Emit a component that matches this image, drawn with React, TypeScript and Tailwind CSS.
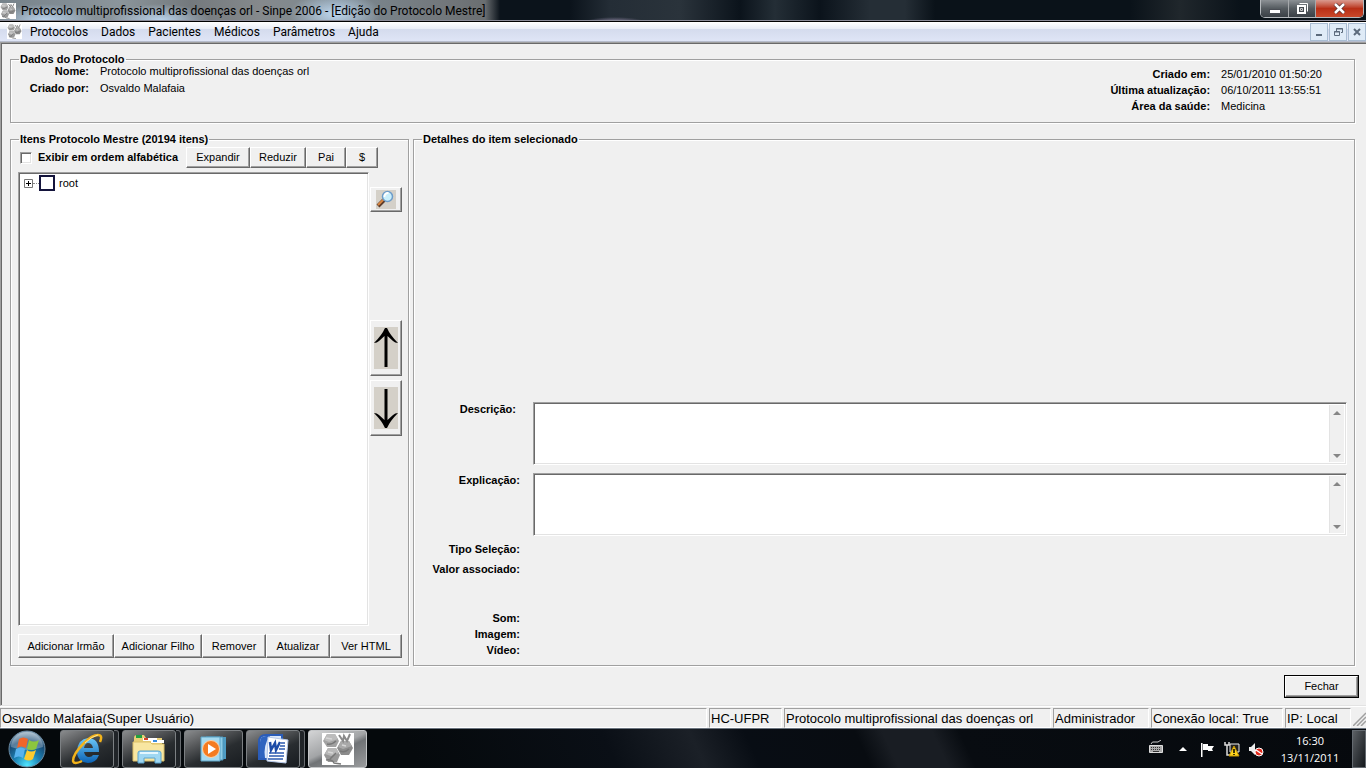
import { useState } from "react";
import type { ReactNode } from "react";

const menus = ["Protocolos", "Dados", "Pacientes", "Médicos", "Parâmetros", "Ajuda"];

const raised =
  "bg-[#f0f0f0] border border-t-white border-l-white border-r-[#696969] border-b-[#696969] shadow-[inset_-1px_-1px_0_#a0a0a0]";
const sunken =
  "bg-white border border-t-[#a0a0a0] border-l-[#a0a0a0] border-r-white border-b-white shadow-[inset_1px_1px_0_#696969,inset_-1px_-1px_0_#e3e3e3]";

const Button = ({ className = "", children, ...rest }: any) => (
  <button type="button" className={`${raised} flex items-center justify-center whitespace-nowrap ${className}`} {...rest}>
    {children}
  </button>
);

const Group = ({ title, className = "", children }: { title: string; className?: string; children: ReactNode }) => (
  <fieldset
    className={`flex min-w-0 flex-col border border-[#a0a0a0] shadow-[1px_1px_0_#fff,inset_1px_1px_0_#fff] ${className}`}
  >
    <legend className="ml-2 px-px text-[11px] leading-3 font-bold">{title}</legend>
    {children}
  </fieldset>
);

const SinpeIcon = ({ size }: { size: number }) => (
  <svg width={size} height={size} viewBox="0 0 32 32" className="shrink-0">
    <rect width="32" height="32" fill="#fff" />
    <path d="M5 1h8l4 7-3 6H5L1 8z" fill="#a2a2a2" />
    <path d="M5 1h8l3 5-9 3-5-2z" fill="#bcbcbc" />
    <path d="M6 15h8l4 7-3 7H6l-4-7z" fill="#989898" />
    <path d="M6 15h8l3 5-8 3-6-2z" fill="#b8b8b8" />
    <path d="M19 8h8l4 7-4 7h-8l-4-7z" fill="#8c8c8c" />
    <path d="M19 8h8l3 5-9 3-5-2z" fill="#a9a9a9" />
    <path d="M17 2l4 6 1-5 3 5 3-7" stroke="#8a8a8a" strokeWidth="2" fill="none" />
    <path d="M4 27q6-1 8 3l7 1M5 11q5 1 9-3M18 18q5 2 9-2M8 26l6-6" stroke="#787878" strokeWidth="1.5" fill="none" />
    <path d="M4 5l6 1M20 12l4 1M6 19l5 1" stroke="#d6d6d6" strokeWidth="1.5" fill="none" />
  </svg>
);

const Magnifier = () => (
  <svg width="20" height="19" viewBox="0 0 20 19">
    <rect width="20" height="19" fill="#d4d0c8" />
    <path d="M2 16l6-6" stroke="#5b3a28" strokeWidth="4" />
    <path d="M2 15l6-6" stroke="#d88642" strokeWidth="2" />
    <circle cx="11.5" cy="6.500" r="5" fill="#c9effc" stroke="#6d9cc9" strokeWidth="1.5" />
    <path d="M8.500 7a3.500 3.500 0 0 1 4-4" stroke="#fff" strokeWidth="2" fill="none" />
  </svg>
);

const Arrow = ({ down = false }) => (
  <svg width="24" height="42" viewBox="0 0 24 42" className={down ? "rotate-180" : ""}>
    <rect width="24" height="42" fill="#d4d0c8" />
    <path d="M10.500 40V9L5 14q-2 2-5 2Q8 8 11 1h2q3 7 11 15-3 0-5-2l-5.500-5v31z" fill="#000" />
  </svg>
);

const TextBox = ({ id }: { id: string }) => (
  <div className={`${sunken} flex h-[63px] p-0.5`}>
    <textarea id={id} className="min-w-0 flex-1 resize-none bg-white outline-none" />
    <div className="flex w-[15px] flex-col justify-between border-l border-[#e3e3e3] bg-[#f0f0f0] pt-[5px] pb-[3px]">
      <button type="button" aria-label="Rolar para cima" className="flex justify-center py-px">
        <svg width="8" height="4" viewBox="0 0 8 4"><path d="M4 0l4 4H0z" fill="#868686" /></svg>
      </button>
      <button type="button" aria-label="Rolar para baixo" className="flex justify-center py-px">
        <svg width="8" height="4" viewBox="0 0 8 4"><path d="M0 0h8L4 4z" fill="#868686" /></svg>
      </button>
    </div>
  </div>
);

const TitleBar = () => (
  <header className="flex h-[22px] items-start border-b border-black bg-[radial-gradient(ellipse_50px_16px_at_45px_20px,#b9d2eb,transparent),radial-gradient(ellipse_50px_16px_at_160px_20px,#b9d2eb,transparent),radial-gradient(ellipse_46px_22px_at_335px_14px,#bdd6ee,transparent),radial-gradient(ellipse_30px_5px_at_615px_22px,#8c83a0,transparent),linear-gradient(90deg,#77838b_0px,#8b959b_120px,#74797d_190px,#85898c_260px,#7c8991_340px,#73787c_440px,#6a6e71_485px,#0b131b_500px,#0b131b_570px,#242d36_610px,#2a333b_680px,#0b131b_740px,#242e36_775px,#0b131b_820px,#252e36_870px,#252e36_905px,#0a1219_935px,#0a1219_1130px,#20272c_1180px,#0a1219_1240px)] shadow-[inset_0_-1px_0_#8b8b98]">
    <div className="flex min-w-0 flex-1 items-center gap-[5px] pt-[3px]">
      <SinpeIcon size={16} />
      <h1 className="truncate text-[12px] leading-4">
        Protocolo multiprofissional das doenças orl - Sinpe 2006 - [Edição do Protocolo Mestre]
      </h1>
    </div>
    <div className="mr-0.5 flex h-[18px] overflow-hidden rounded-b-[5px] border border-t-0 border-[#b5b9bd]">
      <button type="button" aria-label="Minimizar" className="flex w-[28px] items-center justify-center border-r border-[#a5a8ab] bg-linear-to-b from-[#8c9195] via-[#555b60] via-50% to-[#3a4046]">
        <svg width="12" height="10" viewBox="0 0 12 10"><rect x="0.500" y="5.500" width="11" height="4" fill="#fff" stroke="#4a4e55" /></svg>
      </button>
      <button type="button" aria-label="Restaurar" className="flex w-[27px] items-center justify-center border-r border-[#a5a8ab] bg-linear-to-b from-[#8c9195] via-[#555b60] via-50% to-[#3a4046]">
        <svg width="13" height="13" viewBox="0 0 13 13" fill="none"><path d="M3.500 1.500h8v8" stroke="#fff" /><path d="M2 4h7v7H2z" fill="#444a50" stroke="#fff" strokeWidth="2" /><path d="M4.500 6.500h2v2h-2z" stroke="#ccc" /></svg>
      </button>
      <button type="button" aria-label="Fechar janela" className="flex w-[47px] items-center justify-center bg-linear-to-b from-[#d99a8f] via-[#b82f16] via-50% to-[#c9482a]">
        <svg width="13" height="11" viewBox="0 0 13 11"><path d="M2 1l9 9M11 1l-9 9" stroke="#5a3030" strokeWidth="4" /><path d="M2 1l9 9M11 1l-9 9" stroke="#fff" strokeWidth="2.500" /></svg>
      </button>
    </div>
  </header>
);

const mdiButton = "flex h-[18px] w-[18px] items-center justify-center border border-[#a9bdd3] bg-[#dfebf7]";

const MenuBar = () => (
  <nav className="flex h-[20px] items-center border-b border-[#b6bccc] bg-[linear-gradient(#fff,#e9edf7_35%,#d4dbed_36%,#dfe5f6)] pl-[7px]">
    <SinpeIcon size={15} />
    <div className="flex flex-1 gap-[13px] pl-2">
      {menus.map((item) => (
        <button key={item} type="button" className="text-[12px] leading-4">
          {item}
        </button>
      ))}
    </div>
    <div className="flex gap-px">
      <button type="button" aria-label="Minimizar documento" className={mdiButton}>
        <svg width="8" height="8" viewBox="0 0 8 8"><path d="M1 6h6v2H1z" fill="#5c6b7c" /></svg>
      </button>
      <button type="button" aria-label="Restaurar documento" className={mdiButton}>
        <svg width="9" height="8" viewBox="0 0 9 8" fill="none" stroke="#5c6b7c"><path d="M2.500 3V.5h6v4H7M2 1h7M.5 3.500h5v4h-5zM0 4h6" /></svg>
      </button>
      <button type="button" aria-label="Fechar documento" className={mdiButton}>
        <svg width="8" height="8" viewBox="0 0 8 8"><path d="M1 1l6 6M7 1L1 7" stroke="#5c6b7c" strokeWidth="2" /></svg>
      </button>
    </div>
  </nav>
);

const ProtocolInfo = () => (
  <Group title="Dados do Protocolo" className="min-h-[70px]">
    <div className="flex justify-between pr-8">
      <dl className="grid grid-cols-[78px_auto] content-start gap-x-[11px] gap-y-[5px] leading-3">
        <dt className="text-right font-bold">Nome:</dt>
        <dd>Protocolo multiprofissional das doenças orl</dd>
        <dt className="text-right font-bold">Criado por:</dt>
        <dd>Osvaldo Malafaia</dd>
      </dl>
      <dl className="grid grid-cols-[auto_auto] content-start gap-x-[11px] pt-px leading-4">
        <dt className="text-right font-bold">Criado em:</dt>
        <dd>25/01/2010 01:50:20</dd>
        <dt className="text-right font-bold">Última atualização:</dt>
        <dd>06/10/2011 13:55:51</dd>
        <dt className="text-right font-bold">Área da saúde:</dt>
        <dd>Medicina</dd>
      </dl>
    </div>
  </Group>
);

const ProtocolItems = () => {
  const [alphabetical, setAlphabetical] = useState(false);

  return (
    <Group title="Itens Protocolo Mestre (20194 itens)" className="w-[399px] shrink-0">
      <div className="flex flex-1 flex-col pt-[2px] pr-[6px] pb-[7px] pl-[7px]">
        <div className="flex h-[21px] items-center">
          <label className="flex w-[168px] items-center gap-1.5 pl-0.5 font-bold whitespace-nowrap">
            <input
              type="checkbox"
              checked={alphabetical}
              onChange={(e) => setAlphabetical(e.target.checked)}
              className={`${sunken} h-3 w-3 shrink-0 appearance-none checked:bg-[#333]`}
            />
            Exibir em ordem alfabética
          </label>
          <Button className="h-full w-[64px]">Expandir</Button>
          <Button className="h-full w-[56px]">Reduzir</Button>
          <Button className="h-full w-[40px]">Pai</Button>
          <Button className="h-full w-[32px]">$</Button>
        </div>
        <div className="mt-1 flex flex-1">
          <ul className={`${sunken} flex-1 p-[2px] pl-[5px]`}>
            <li className="flex items-center leading-4">
              <button type="button" aria-label="Expandir root" className="flex">
                <svg width="9" height="9" viewBox="0 0 9 9" fill="none"><path d="M.5.5h8v8h-8z" stroke="#777" /><path d="M2 4.500h5M4.500 2v5" stroke="#000" /></svg>
              </button>
              <span className="w-1.5 border-t border-dotted border-[#888]" />
              <input type="checkbox" id="root" className="h-4 w-4 appearance-none border-2 border-[#14143c] bg-white checked:bg-[#14143c]" />
              <label htmlFor="root" className="pl-1">root</label>
            </li>
          </ul>
          <div className="flex w-[33px] flex-col pt-[15px] pl-px">
            <Button aria-label="Pesquisar" className="h-[25px]"><Magnifier /></Button>
            <Button aria-label="Mover para cima" className="mt-[108px] h-[56px]"><Arrow /></Button>
            <Button aria-label="Mover para baixo" className="mt-1 h-[56px]"><Arrow down /></Button>
          </div>
        </div>
        <div className="mt-2 flex h-[24px]">
          <Button className="w-[96px]">Adicionar Irmão</Button>
          <Button className="w-[88px]">Adicionar Filho</Button>
          <Button className="w-[64px]">Remover</Button>
          <Button className="w-[64px]">Atualizar</Button>
          <Button className="flex-1">Ver HTML</Button>
        </div>
      </div>
    </Group>
  );
};

const ItemDetails = () => (
  <Group title="Detalhes do item selecionado" className="flex-1">
    <div className="pt-[257px] pr-[7px] pb-1">
      <div className="grid grid-cols-[106px_1fr] gap-x-[13px] gap-y-2 text-right leading-[14px] font-bold">
        <label htmlFor="descricao" className="pr-1">Descrição:</label>
        <TextBox id="descricao" />
        <label htmlFor="explicacao">Explicação:</label>
        <TextBox id="explicacao" />
      </div>
      <dl className="w-[106px] pt-[5px] text-right leading-4 font-bold">
        <dt>Tipo Seleção:</dt>
        <dt className="pt-1">Valor associado:</dt>
        <dt className="pt-[33px]">Som:</dt>
        <dt>Imagem:</dt>
        <dt>Vídeo:</dt>
      </dl>
    </div>
  </Group>
);

const panel =
  "border border-t-[#a0a0a0] border-l-[#a0a0a0] border-r-white border-b-white pl-px whitespace-nowrap";

const StatusBar = () => (
  <footer className="flex h-[22px] gap-0.5 border-t border-white bg-[#f0f0f0] pt-px text-[13px] leading-[19px]">
    <div className={`${panel} flex-1`}>Osvaldo Malafaia(Super Usuário)</div>
    <div className={`${panel} w-[73px]`}>HC-UFPR</div>
    <div className={`${panel} w-[267px]`}>Protocolo multiprofissional das doenças orl</div>
    <div className={`${panel} w-[96px]`}>Administrador</div>
    <div className={`${panel} w-[132px]`}>Conexão local: True</div>
    <div className={`${panel} w-[66px]`}>IP: Local</div>
    <svg width="13" height="18" viewBox="0 0 13 18" className="shrink-0">
      <path d="M0 18L13 5M4 18l9-9M8 18l5-5" stroke="#a0a0a0" strokeWidth="1.500" />
    </svg>
  </footer>
);

const StartOrb = () => (
  <svg width="38" height="38" viewBox="0 0 38 38">
    <defs>
      <radialGradient id="orb" cx="50%" cy="95%" r="90%">
        <stop offset="0" stopColor="#4fe6ff" />
        <stop offset=".4" stopColor="#1c83b5" />
        <stop offset=".75" stopColor="#184a74" />
        <stop offset="1" stopColor="#8ba6bb" />
      </radialGradient>
    </defs>
    <circle cx="19" cy="19" r="18" fill="url(#orb)" stroke="#6b8ba3" />
    <path d="M3 17a16 15 0 0 1 32 0q-16 6-32 0z" fill="#fff" opacity=".28" />
    <path d="M11 9q4-3 9 0l-2 9q-5-3-9 0z" fill="#f0652a" />
    <path d="M21 10q5 3 10 0l-3 9q-4 2-9 0z" fill="#8cc63e" />
    <path d="M8 19q5-3 9 0l-2 9q-4-3-9 0z" fill="#58b3ee" />
    <path d="M19 20q4 3 9 0l-3 9q-4 3-9 0z" fill="#fdcb2e" />
  </svg>
);

const ExplorerE = () => (
  <svg width="34" height="34" viewBox="0 0 34 34" fill="none">
    <defs>
      <linearGradient id="ieBlue" x2="0" y2="1">
        <stop stopColor="#6cc7f7" />
        <stop offset="1" stopColor="#0b62b5" />
      </linearGradient>
    </defs>
    <path d="M29 20H14q1 5 5 5 3 0 4-2h6q-3 8-11 8-11-1-11-12Q8 7 18 6q11 0 11 14zM14 16h9q-1-5-5-5-3 0-4 5z" fill="url(#ieBlue)" />
    <path d="M30 10q3-7-2-7-6 0-14 8Q3 22 3 29q1 4 9 0" stroke="#f2b31b" strokeWidth="2.500" />
    <path d="M28 3q-6 1-13 8" stroke="#ffe694" />
  </svg>
);

const FolderIcon = () => (
  <svg width="34" height="32" viewBox="0 0 34 32">
    <path d="M2 5q0-3 3-3h7l2 3h16v22H2z" fill="#e8cf76" />
    <path d="M4 2h6v3H4z" fill="#20a040" />
    <path d="M11 5h14v3H11z" fill="#fff" /><path d="M12 5h4v2h-4z" fill="#d5402c" />
    <path d="M19 7h13v3H19z" fill="#fff" /><path d="M21 7h4v2h-4z" fill="#3a8de0" />
    <path d="M1 9h17l2 2h12v17H1z" fill="#f8e6a1" stroke="#dcc06a" />
    <path d="M6 20q0-2 2-2h18q3 0 3 2v10h-6v-5H12v5H6z" fill="#9fd7f2" stroke="#5aa4cf" />
    <path d="M8 20h18" stroke="#e4f7ff" strokeWidth="2" />
  </svg>
);

const PlayerIcon = () => (
  <svg width="28" height="26" viewBox="0 0 28 26">
    <path d="M8 1h18v22H8z" fill="#4e9cc4" /><path d="M6 1h17v23H6z" fill="#8dcbe6" stroke="#4d94b8" />
    <path d="M1 1h19v24H1z" fill="#a5d9ef" stroke="#5ba5c8" />
    <circle cx="11" cy="13" r="8.500" fill="#f47b20" stroke="#fbd2a8" />
    <path d="M8 8l8 5-8 5z" fill="#fff" />
  </svg>
);

const WordIcon = () => (
  <svg width="32" height="32" viewBox="0 0 32 32" fill="none">
    <path d="M2 26V9q0-7 7-7h16v24z" fill="#dce8fa" stroke="#2a5cb8" strokeWidth="2" />
    <path d="M3 25V9q0-6 6-6h4Q6 12 8 25z" fill="#2f64bf" />
    <path d="M11 4l20 3-2 23-19-2z" fill="#fff" stroke="#b5c8e8" />
    <path d="M13 9l1 8 4-7 1 7 4-8" stroke="#1e4da8" strokeWidth="2.500" />
    <path d="M24 10h4M23 13h5M22 16h6M12 20h15M12 23h15M11 26h15" stroke="#2b59b0" strokeWidth="1.500" />
  </svg>
);

const taskGlass =
  "flex h-[38px] items-center justify-center rounded-[3px] border border-[#7c8083] bg-[linear-gradient(155deg,#8a8c8e_0%,#57595b_30%,#292d30_58%,#181c20_100%)]";

const TaskButton = ({ label, stacked = false, active = false, children }: { label: string; stacked?: boolean; active?: boolean; children: ReactNode }) => (
  <button type="button" aria-label={label} className="flex w-[59px]">
    <span
      className={
        active
          ? "flex h-[38px] flex-1 items-center justify-center rounded-[3px] border border-[#c4c6c8] bg-[linear-gradient(155deg,#d4d5d6,#a2a4a6_45%,#707376_55%,#9a9c9e)]"
          : `${taskGlass} flex-1`
      }
    >
      {children}
    </span>
    {stacked && <span className="h-[38px] w-[5px] rounded-r-[3px] border border-l-0 border-[#686c70] bg-[#202428]" />}
  </button>
);

const Tray = () => (
  <div className="flex items-center text-white">
    <svg width="16" height="14" viewBox="0 0 16 14" fill="none" className="-mt-1">
      <path d="M3 4q1-3 4-2t6-2" stroke="#ccc" />
      <path d="M1.500 5.500h13v7h-13z" fill="#a9a9a9" stroke="#ddd" />
      <path d="M3 7.500h10M3 9.500h10" stroke="#333" strokeDasharray="1 1" /><path d="M5 11.500h6" stroke="#333" />
    </svg>
    <svg width="8" height="4" viewBox="0 0 8 4" className="mt-px ml-[15px]"><path d="M0 4l4-4 4 4z" fill="#fff" /></svg>
    <svg width="15" height="15" viewBox="0 0 15 15" className="mt-px ml-[13px]">
      <path d="M1 1h1.500v14H1z" fill="#fff" />
      <path d="M3 2h5v2h6l-2 3 1 2H8V8H3z" fill="#fff" />
    </svg>
    <svg width="16" height="16" viewBox="0 0 16 16" className="mt-px ml-[9px]" fill="none">
      <path d="M1 1v3h4V1M3 4v10h4" stroke="#ddd" strokeWidth="1.500" />
      <path d="M6 3h9v8H6z" fill="#222" stroke="#eee" />
      <path d="M10 5l5 10H5z" fill="#ffd51e" stroke="#c59500" />
      <path d="M10 8v4M10 13v1" stroke="#000" strokeWidth="1.500" />
    </svg>
    <svg width="16" height="16" viewBox="0 0 16 16" className="mt-px ml-2" fill="none">
      <path d="M1 6h2l4-4v12l-4-4H1z" fill="#eee" />
      <circle cx="11" cy="11" r="4" fill="#e22a1c" stroke="#fff" />
      <path d="M8 9l6 4" stroke="#fff" strokeWidth="1.500" />
    </svg>
    <div className="ml-1 w-[84px] text-center text-[11px] leading-[17px]">
      <div>16:30</div>
      <div>13/11/2011</div>
    </div>
    <button type="button" aria-label="Mostrar área de trabalho" className="h-[38px] w-[14px] border border-[#646a70] bg-linear-to-br from-[#5c6064] to-[#15191d]" />
  </div>
);

const Taskbar = () => (
  <div className="flex h-[40px] items-center justify-between border-t border-[#6c7580] bg-[linear-gradient(65deg,#05090c_0px,#05090c_380px,#0a0f16_560px,#1b2027_640px,#080d14_690px,#080c11_790px,#191d23_815px,#191d23_860px,#080c11_885px,#06090d_100%)]">
    <div className="flex items-center">
      <button type="button" aria-label="Iniciar" className="mr-[14px] ml-2"><StartOrb /></button>
      <div className="flex gap-[3px]">
        <TaskButton label="Internet Explorer" stacked><ExplorerE /></TaskButton>
        <TaskButton label="Windows Explorer" stacked><FolderIcon /></TaskButton>
        <TaskButton label="Windows Media Player"><PlayerIcon /></TaskButton>
        <TaskButton label="Microsoft Word" stacked><WordIcon /></TaskButton>
        <TaskButton label="Sinpe 2006" active><SinpeIcon size={32} /></TaskButton>
      </div>
    </div>
    <Tray />
  </div>
);

const App = () => (
  <div className="flex min-h-screen flex-col bg-[#f0f0f0] text-black">
    <div className="font-[Roboto,'Open_Sans',sans-serif]">
      <TitleBar />
      <MenuBar />
    </div>
    <main className="flex flex-1 flex-col border-t border-l border-[#a0a0a0] border-b border-b-[#e3e3e3] px-[9px] pt-[10px] pb-[7px] font-['Liberation_Sans',Arial,sans-serif] text-[11px] shadow-[inset_1px_1px_0_#696969]">
      <div className="flex flex-1 flex-col gap-[10px] pr-[2px]">
        <ProtocolInfo />
        <div className="flex flex-1 gap-1">
          <ProtocolItems />
          <ItemDetails />
        </div>
      </div>
      <div className="-mr-0.5 flex justify-end pt-[9px]">
        <div className="border border-black">
          <Button className="h-[21px] w-[73px]">Fechar</Button>
        </div>
      </div>
    </main>
    <div className="font-['Liberation_Sans',Arial,sans-serif]">
      <StatusBar />
    </div>
    <div className="font-['Open_Sans','Noto_Sans',sans-serif]">
      <Taskbar />
    </div>
  </div>
);

export default App;
